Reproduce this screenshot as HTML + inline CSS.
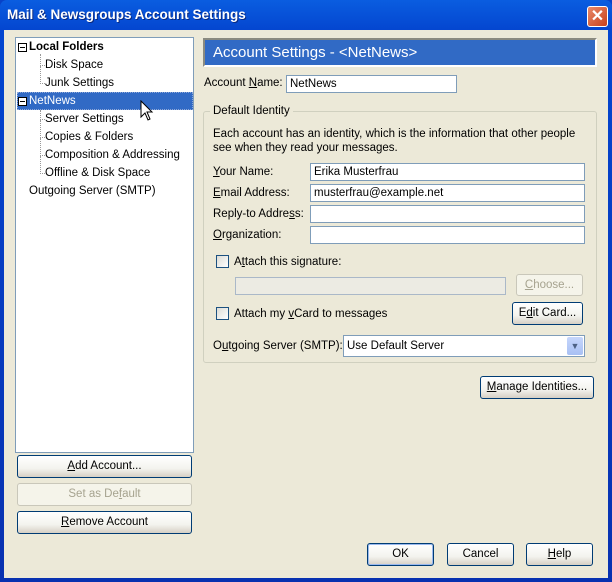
<!DOCTYPE html>
<html><head><meta charset="utf-8"><style>
*{box-sizing:border-box;margin:0;padding:0}
body{width:612px;height:582px;overflow:hidden;font-family:"Liberation Sans",sans-serif;font-size:11.5px;color:#000;background:#0842c8}
.win{position:absolute;left:0;top:0;width:612px;height:582px;background:linear-gradient(#0a5de0,#0446d0 30px,#0831b0);border-radius:7px 7px 0 0}
.title{position:absolute;left:7px;top:7px;color:#fff;font-weight:bold;font-size:13.5px;text-shadow:1px 1px #0a2a80}
.close{position:absolute;left:587px;top:6px;width:21px;height:21px;border:1px solid #fff;border-radius:3px;background:linear-gradient(135deg,#e88a6a,#c8401c);color:#fff;font-size:16px;font-weight:bold;text-align:center;line-height:19px}
.body{position:absolute;left:4px;top:30px;width:604px;height:548px;background:#ECE9D8}
.a{position:absolute}
.tree{left:15px;top:37px;width:179px;height:416px;background:#fff;border:1px solid #7F9DB9}
.row{position:absolute;height:17px;line-height:17px;white-space:nowrap}
.pm{position:absolute;width:9px;height:9px;border:1px solid #000;background:#fff}
.pm:after{content:"";position:absolute;left:1px;top:3px;width:5px;height:1px;background:#000}
.dot{position:absolute;border-left:1px dotted #999;border-bottom:1px dotted #999}
.btn{position:absolute;border:1px solid #003C74;border-radius:3px;background:linear-gradient(#fff,#f3f3ee 60%,#d6d0c5);text-align:center;line-height:21px}
.btn.dis{border-color:#c9c7ba;color:#a6a38f;background:#f5f4ea}
.inp{position:absolute;background:#fff;border:1px solid #7F9DB9;padding-left:3px;line-height:16px}
.cb{position:absolute;width:13px;height:13px;border:1px solid #1C5180;background:linear-gradient(135deg,#dcdcd6,#fff)}
u{text-decoration:underline}
</style></head><body>
<div class="win">
<div class="title">Mail &amp; Newsgroups Account Settings</div>
<div class="close">✕</div>
</div>
<div class="body"></div>
<div class="a tree">
 <div class="a" style="left:1px;top:54px;width:176px;height:18px;background:#316AC5;border:1px dotted #8fa8d8"></div>
 <div class="pm" style="left:2px;top:5px"></div><div class="row" style="left:13px;top:1px;font-weight:bold">Local Folders</div>
 <div class="dot" style="left:24px;top:16px;width:5px;height:12px"></div><div class="row" style="left:29px;top:19px">Disk Space</div>
 <div class="dot" style="left:24px;top:28px;width:5px;height:18px"></div><div class="row" style="left:29px;top:37px">Junk Settings</div>
 <div class="pm" style="left:2px;top:59px"></div><div class="row" style="left:13px;top:55px;color:#fff">NetNews</div>
 <svg class="a" style="left:124px;top:62px" width="14" height="22" viewBox="0 0 14 22"><path d="M1 1 L1 17 L5 13 L8 20 L10 19 L7 12 L12 12 Z" fill="#fff" stroke="#000" stroke-width="1"/></svg>
 <div class="dot" style="left:24px;top:72px;width:5px;height:10px"></div><div class="row" style="left:29px;top:73px">Server Settings</div>
 <div class="dot" style="left:24px;top:82px;width:5px;height:18px"></div><div class="row" style="left:29px;top:91px">Copies &amp; Folders</div>
 <div class="dot" style="left:24px;top:100px;width:5px;height:18px"></div><div class="row" style="left:29px;top:109px">Composition &amp; Addressing</div>
 <div class="dot" style="left:24px;top:118px;width:5px;height:18px"></div><div class="row" style="left:29px;top:127px">Offline &amp; Disk Space</div>
 <div class="row" style="left:13px;top:145px">Outgoing Server (SMTP)</div>
</div>
<div class="btn" style="left:17px;top:455px;width:175px;height:23px"><u>A</u>dd Account...</div>
<div class="btn dis" style="left:17px;top:483px;width:175px;height:23px">Set as De<u>f</u>ault</div>
<div class="btn" style="left:17px;top:511px;width:175px;height:23px"><u>R</u>emove Account</div>

<div class="a" style="left:203px;top:38px;width:394px;height:29px;background:#316AC5;border:2px solid #8a8a80;border-right-color:#fff;border-bottom-color:#fff;color:#fff;font-size:15px;line-height:25px;padding-left:8px">Account Settings - &lt;NetNews&gt;</div>
<div class="a" style="left:204px;top:77px">Account <u>N</u>ame:</div>
<div class="inp" style="left:286px;top:75px;width:171px;height:18px">NetNews</div>

<div class="a" style="left:203px;top:111px;width:394px;height:252px;border:1px solid #d0d0bf;border-radius:3px"></div>
<div class="a" style="left:210px;top:105px;background:#ECE9D8;padding:0 3px">Default Identity</div>
<div class="a" style="left:213px;top:127px;line-height:14px;width:380px">Each account has an identity, which is the information that other people see when they read your messages.</div>
<div class="a" style="left:213px;top:166px"><u>Y</u>our Name:</div>
<div class="inp" style="left:310px;top:163px;width:275px;height:18px">Erika Musterfrau</div>
<div class="a" style="left:213px;top:187px"><u>E</u>mail Address:</div>
<div class="inp" style="left:310px;top:184px;width:275px;height:18px">musterfrau@example.net</div>
<div class="a" style="left:213px;top:208px">Reply-to Addre<u>s</u>s:</div>
<div class="inp" style="left:310px;top:205px;width:275px;height:18px"></div>
<div class="a" style="left:213px;top:229px"><u>O</u>rganization:</div>
<div class="inp" style="left:310px;top:226px;width:275px;height:18px"></div>
<div class="cb" style="left:216px;top:255px"></div>
<div class="a" style="left:234px;top:256px">A<u>t</u>tach this signature:</div>
<div class="a" style="left:235px;top:277px;width:271px;height:18px;background:#ECEBE3;border:1px solid #aab8c8"></div>
<div class="btn dis" style="left:516px;top:274px;width:67px;height:22px"><u>C</u>hoose...</div>
<div class="cb" style="left:216px;top:307px"></div>
<div class="a" style="left:234px;top:308px">Attach my <u>v</u>Card to messages</div>
<div class="btn" style="left:512px;top:302px;width:71px;height:23px">E<u>d</u>it Card...</div>
<div class="a" style="left:213px;top:340px">O<u>u</u>tgoing Server (SMTP):</div>
<div class="inp" style="left:343px;top:335px;width:242px;height:22px;line-height:20px">Use Default Server</div>
<div class="a" style="left:567px;top:337px;width:16px;height:18px;background:linear-gradient(#c6d6fb,#a8c0f4);border-radius:2px;color:#4d6185;text-align:center;font-size:9px;line-height:18px">▼</div>
<div class="btn" style="left:480px;top:376px;width:114px;height:23px"><u>M</u>anage Identities...</div>

<div class="btn" style="left:367px;top:543px;width:67px;height:23px;box-shadow:inset 0 0 0 1px #9ab9ee">OK</div>
<div class="btn" style="left:447px;top:543px;width:67px;height:23px">Cancel</div>
<div class="btn" style="left:526px;top:543px;width:67px;height:23px"><u>H</u>elp</div>
</body></html>
